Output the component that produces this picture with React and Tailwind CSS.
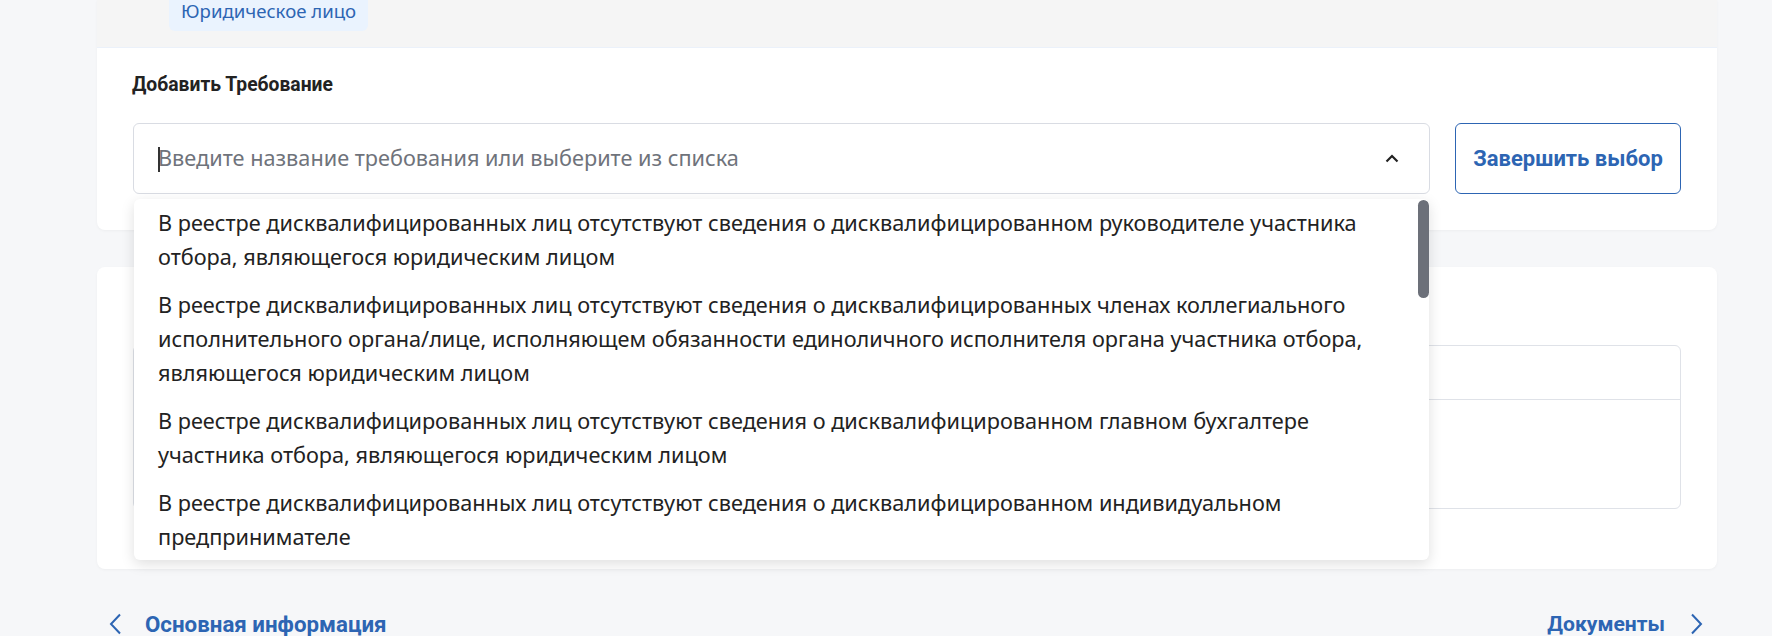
import React from "react";

const items = [
  [
    "В реестре дисквалифицированных лиц отсутствуют сведения о дисквалифицированном руководителе участника",
    "отбора, являющегося юридическим лицом",
  ],
  [
    "В реестре дисквалифицированных лиц отсутствуют сведения о дисквалифицированных членах коллегиального",
    "исполнительного органа/лице, исполняющем обязанности единоличного исполнителя органа участника отбора,",
    "являющегося юридическим лицом",
  ],
  [
    "В реестре дисквалифицированных лиц отсутствуют сведения о дисквалифицированном главном бухгалтере",
    "участника отбора, являющегося юридическим лицом",
  ],
  [
    "В реестре дисквалифицированных лиц отсутствуют сведения о дисквалифицированном индивидуальном",
    "предпринимателе",
  ],
];

export default function App() {
  return (
    <div className="min-h-screen bg-[#f6f7f9] pl-[97px] pr-[55px] font-['Noto_Sans',sans-serif] text-[#222]">
      {/* Card 1 */}
      <div className="bg-white rounded-b-lg shadow-[0_1px_3px_rgba(0,0,0,0.04)]">
        <div className="h-[48px] bg-[#f5f5f5] border-b border-[#ebf1fa] pl-[72px]">
          <div className="inline-block -mt-[10px] h-[38px] px-3 rounded-md bg-[#eaf3fe] text-[#2d65b3] text-[18.6px] leading-[35px]">
            Юридическое лицо
          </div>
        </div>
        <div className="px-9 pt-[24px] pb-[36px]">
          <div className="text-[19.3px] leading-[26px] font-bold font-['Roboto',sans-serif] text-[#222] -ml-[1px]">
            Добавить Требование
          </div>
          <div className="mt-[25px] flex gap-[25px]">
            <div className="relative flex-1 h-[71px] border border-[#d9dce3] rounded-md flex items-center pl-6 pr-[30px]">
              <div className="absolute left-[24px] top-[23px] w-[2px] h-[25px] bg-[#333]" />
              <div className="flex-1 text-[21.7px] text-[#6f737b] whitespace-nowrap">
                Введите название требования или выберите из списка
              </div>
              <svg width="14" height="9" viewBox="0 0 14 9" fill="none">
                <path d="M1.5 7.5L7 2L12.5 7.5" stroke="#222" strokeWidth="2.2" />
              </svg>
              {/* Dropdown */}
              <div className="absolute left-0 right-0 top-full mt-[6px] h-[361px] bg-white rounded-md shadow-[0_4px_14px_rgba(0,0,0,0.13)] overflow-hidden z-10">
                {items.map((lines, i) => (
                  <div key={i} className="px-6 py-[7px] text-[21.7px] leading-[34px] text-[#222]">
                    {lines.map((l, j) => (
                      <div key={j} className="whitespace-nowrap">{l}</div>
                    ))}
                  </div>
                ))}
                <div className="absolute right-0 top-[1px] w-[11px] h-[98px] rounded-full bg-[#6c7079]" />
              </div>
            </div>
            <button className="w-[226px] h-[71px] border border-[#2d65b3] rounded-md text-[#2d65b3] text-[22px] font-bold font-['Roboto',sans-serif]">
              Завершить выбор
            </button>
          </div>
        </div>
      </div>

      {/* Card 2 */}
      <div className="mt-[37px] h-[302px] bg-white rounded-lg shadow-[0_1px_3px_rgba(0,0,0,0.04)] px-9 pt-[78px]">
        <div className="border border-[#dfe2e8] rounded-md">
          <div className="h-[54px] border-b border-[#dfe2e8]" />
          <div className="h-[108px]" />
        </div>
      </div>

      {/* Bottom nav */}
      <div className="mt-[41px] flex justify-between items-center font-['Roboto',sans-serif] font-bold text-[22px] leading-[28px] text-[#2d65b3]">
        <div className="flex items-center pl-[11px]">
          <svg width="15" height="22" viewBox="0 0 15 22" fill="none">
            <path d="M12 1.5L3 11L12 20.5" stroke="#2d65b3" strokeWidth="2" />
          </svg>
          <span className="ml-[22px] text-[22.3px]">Основная информация</span>
        </div>
        <div className="flex items-center pr-[13px]">
          <span className="text-[21.1px]">Документы</span>
          <svg className="ml-[24px]" width="15" height="22" viewBox="0 0 15 22" fill="none">
            <path d="M3 1.5L12 11L3 20.5" stroke="#2d65b3" strokeWidth="2" />
          </svg>
        </div>
      </div>
    </div>
  );
}
